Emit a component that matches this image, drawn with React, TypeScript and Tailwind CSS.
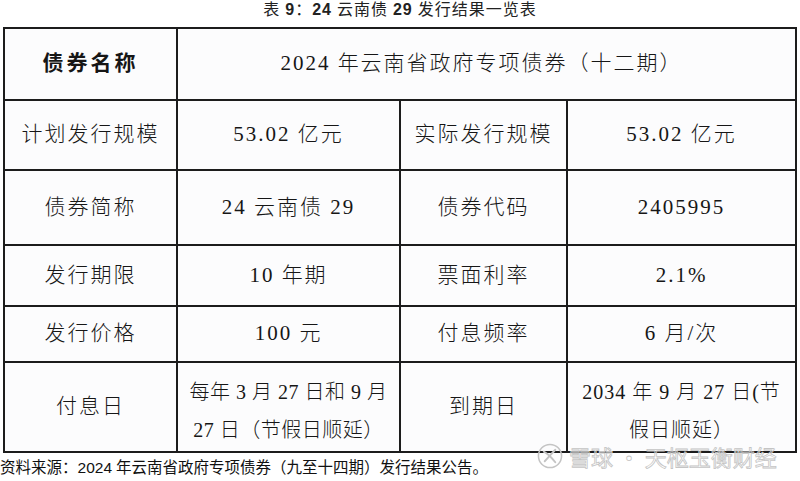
import React from "react";

const F = "font-['Liberation_Serif','Noto_Sans_CJK_SC',serif]";

function Cell({
  children,
  className = "",
  bold = false,
}: {
  children: React.ReactNode;
  className?: string;
  bold?: boolean;
}) {
  return (
    <div
      className={`bg-[#fcfcfd] flex items-center justify-center text-center text-[#161616] whitespace-nowrap ${F} ${
        bold ? "font-bold" : "font-light"
      } ${className}`}
    >
      {children}
    </div>
  );
}

export default function App() {
  return (
    <div className="relative w-[800px] h-[481px] bg-white overflow-hidden">
      {/* title */}
      <div className="h-[27px] flex justify-center">
        <div
          className={`${F} text-[16px] leading-[20px] tracking-[1px] text-[#222] whitespace-nowrap`}
        >
          表 <span className="font-['Liberation_Sans',sans-serif] font-bold">9</span>：
          <span className="font-['Liberation_Sans',sans-serif] font-bold">24</span> 云南债{" "}
          <span className="font-['Liberation_Sans',sans-serif] font-bold">29</span> 发行结果一览表
        </div>
      </div>

      {/* table */}
      <div className="ml-[3px] w-[794px] grid grid-cols-[171px_221px_165px_227px] grid-rows-[70px_68px_73px_59px_54px_88px] gap-[2px] p-[2px] bg-[#1c1c1c]">
        <Cell bold className="text-[21px] tracking-[3px]">
          债券名称
        </Cell>
        <Cell className="col-span-3 pr-[10px] text-[21px] tracking-[2px]">
          2024 年云南省政府专项债券（十二期）
        </Cell>

        <Cell className="text-[21px] tracking-[2px]">计划发行规模</Cell>
        <Cell className="text-[21px] tracking-[2px]">53.02 亿元</Cell>
        <Cell className="text-[21px] tracking-[2px]">实际发行规模</Cell>
        <Cell className="text-[21px] tracking-[2px]">53.02 亿元</Cell>

        <Cell className="text-[21px] tracking-[2px]">债券简称</Cell>
        <Cell className="text-[21px] tracking-[2px]">24 云南债 29</Cell>
        <Cell className="text-[21px] tracking-[2px]">债券代码</Cell>
        <Cell className="text-[21px] tracking-[2px]">2405995</Cell>

        <Cell className="text-[21px] tracking-[2px]">发行期限</Cell>
        <Cell className="text-[21px] tracking-[2px]">10 年期</Cell>
        <Cell className="text-[21px] tracking-[2px]">票面利率</Cell>
        <Cell className="text-[21px] tracking-[2px]">2.1%</Cell>

        <Cell className="text-[21px] tracking-[2px]">发行价格</Cell>
        <Cell className="text-[21px] tracking-[2px]">100 元</Cell>
        <Cell className="text-[21px] tracking-[2px]">付息频率</Cell>
        <Cell className="text-[21px] tracking-[2px]">6 月/次</Cell>

        <Cell className="text-[21px] tracking-[2px]">付息日</Cell>
        <Cell className="text-[20px] tracking-[0.5px] leading-[38px] pt-[8px]">
          <span>
            每年 3 月 27 日和 9 月
            <br />
            27 日（节假日顺延）
          </span>
        </Cell>
        <Cell className="text-[21px] tracking-[2px]">到期日</Cell>
        <Cell className="text-[20px] tracking-[1px] leading-[38px] pt-[8px]">
          <span>
            2034 年 9 月 27 日(节
            <br />
            假日顺延）
          </span>
        </Cell>
      </div>

      {/* footer */}
      <div
        className={`mt-[7px] ${F} text-[15.5px] leading-[16px] text-[#111] whitespace-nowrap`}
      >
        资料来源：<span className="font-['Liberation_Sans',sans-serif]">2024</span> 年云南省政府专项债券（九至十四期）发行结果公告。
      </div>

      {/* watermark */}
      <div className="absolute left-[537px] top-[442px] flex items-center gap-[6px] pointer-events-none">
        <svg width="26" height="26" viewBox="0 0 27 27" fill="none">
          <circle cx="13.5" cy="13.5" r="12" stroke="#c4c4c4" strokeWidth="1.6" />
          <path
            d="M7 9 C11 11, 15 15, 19 20"
            stroke="#c4c4c4"
            strokeWidth="2"
            strokeLinecap="round"
          />
          <path
            d="M19 7 C16 10, 12 15, 8 19"
            stroke="#c4c4c4"
            strokeWidth="2"
            strokeLinecap="round"
          />
        </svg>
        <div className="font-['Noto_Sans_CJK_SC',sans-serif] text-[22px] leading-[28px] text-white/40 [-webkit-text-stroke:0.8px_#c4c4c4] whitespace-nowrap">
          雪球 · 天枢玉衡财经
        </div>
      </div>
    </div>
  );
}
